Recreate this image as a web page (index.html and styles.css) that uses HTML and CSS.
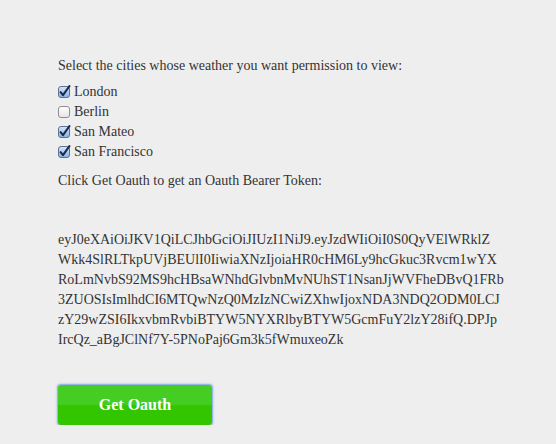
FILE: index.html
```html
<!DOCTYPE html>
<html>
<head>
<meta charset="utf-8">
<link rel="stylesheet" href="styles.css">
</head>
<body>
<main class="page">
  <p class="intro">Select the cities whose weather you want permission to view:</p>
  <ul class="cities">
    <li class="city">
      <svg class="box" width="14" height="14" viewBox="0 0 14 14"><defs><linearGradient id="gc" x1="0" y1="0" x2="0" y2="1"><stop offset="0" stop-color="#d8e8f8"/><stop offset="1" stop-color="#86b2e2"/></linearGradient></defs><rect x="0.5" y="1.5" width="11" height="11" rx="2.5" fill="url(#gc)" stroke="#5d7191"/><path d="M2.6 7.2 L5 10.2 L11.4 1.2" fill="none" stroke="#1b2b52" stroke-width="2.1" stroke-linecap="round" stroke-linejoin="round"/></svg>
      <span>London</span>
    </li>
    <li class="city">
      <svg class="box" width="14" height="14" viewBox="0 0 14 14"><defs><linearGradient id="gu" x1="0" y1="0" x2="0" y2="1"><stop offset="0" stop-color="#ffffff"/><stop offset="1" stop-color="#e4e4e4"/></linearGradient></defs><rect x="0.5" y="1.5" width="11" height="11" rx="2.5" fill="url(#gu)" stroke="#8d8d8d"/></svg>
      <span>Berlin</span>
    </li>
    <li class="city">
      <svg class="box" width="14" height="14" viewBox="0 0 14 14"><rect x="0.5" y="1.5" width="11" height="11" rx="2.5" fill="url(#gc)" stroke="#5d7191"/><path d="M2.6 7.2 L5 10.2 L11.4 1.2" fill="none" stroke="#1b2b52" stroke-width="2.1" stroke-linecap="round" stroke-linejoin="round"/></svg>
      <span>San Mateo</span>
    </li>
    <li class="city">
      <svg class="box" width="14" height="14" viewBox="0 0 14 14"><rect x="0.5" y="1.5" width="11" height="11" rx="2.5" fill="url(#gc)" stroke="#5d7191"/><path d="M2.6 7.2 L5 10.2 L11.4 1.2" fill="none" stroke="#1b2b52" stroke-width="2.1" stroke-linecap="round" stroke-linejoin="round"/></svg>
      <span>San Francisco</span>
    </li>
  </ul>
  <p class="hint">Click Get Oauth to get an Oauth Bearer Token:</p>
  <p class="token">eyJ0eXAiOiJKV1QiLCJhbGciOiJIUzI1NiJ9.eyJzdWIiOiI0S0QyVElWRklZ<br>Wkk4SlRLTkpUVjBEUlI0IiwiaXNzIjoiaHR0cHM6Ly9hcGkuc3Rvcm1wYX<br>RoLmNvbS92MS9hcHBsaWNhdGlvbnMvNUhST1NsanJjWVFheDBvQ1FRb<br>3ZUOSIsImlhdCI6MTQwNzQ0MzIzNCwiZXhwIjoxNDA3NDQ2ODM0LCJ<br>zY29wZSI6IkxvbmRvbiBTYW5NYXRlbyBTYW5GcmFuY2lzY28ifQ.DPJp<br>IrcQz_aBgJClNf7Y-5PNoPaj6Gm3k5fWmuxeoZk</p>
  <button class="btn" type="button">Get Oauth</button>
</main>
</body>
</html>
```
FILE: styles.css
```css
html, body {
  margin: 0;
  padding: 0;
  background: #eeeeee;
}
body {
  font-family: "Liberation Serif", "Times New Roman", serif;
  font-size: 14px;
  line-height: 20px;
  color: #333333;
}
.page {
  display: flex;
  flex-direction: column;
  align-items: flex-start;
  padding: 56px 0 0 58px;
}
.intro {
  margin: 0 0 6px;
}
.cities {
  list-style: none;
  margin: 0;
  padding: 0;
}
.city {
  display: flex;
  align-items: center;
  height: 20px;
}
.box {
  display: block;
  margin: 0 2px 0 0;
  flex: none;
}
.hint {
  margin: 9px 0 0;
}
.token {
  margin: 39px 0 0;
  width: 460px;
  white-space: nowrap;
}
.btn {
  margin: 35px 0 0;
  width: 154px;
  height: 40px;
  border: 0;
  border-radius: 3px;
  background: linear-gradient(#45cd24 0%, #45cd24 48%, #33c500 52%, #33c500 100%);
  box-shadow: 0 0 1px 1px #8fb5e6, 0 0 3px 1px #b4cdee;
  color: #ffffff;
  font-family: "Liberation Serif", "Times New Roman", serif;
  font-size: 16px;
  font-weight: bold;
  padding: 0;
}
```
